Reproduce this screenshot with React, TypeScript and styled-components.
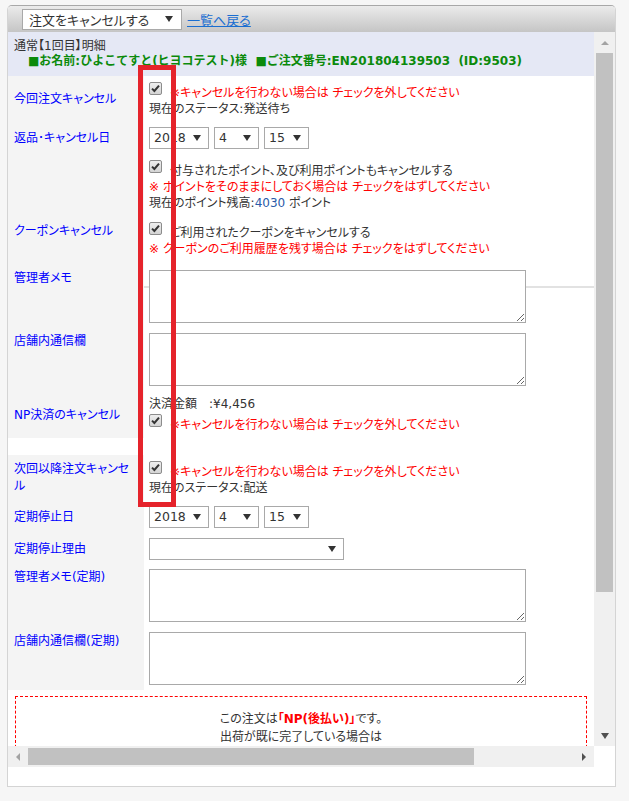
import React from 'react';
import styled, { createGlobalStyle } from 'styled-components';

const Global = createGlobalStyle`
  html, body { margin: 0; padding: 0; background: #f6f6f6; }
  body {
    font-family: "DejaVu Sans", "Noto Sans CJK JP", sans-serif;
    font-size: 12px;
    color: #333;
    font-feature-settings: "palt";
  }
  * { box-sizing: border-box; }
`;

const Page = styled.div`
  position: relative;
  width: 629px;
  height: 801px;
  padding: 5px 0 0 7px;
`;

const Panel = styled.div`
  width: 609px;
  height: 782px;
  border: 1px solid #d4d4d4;
  border-top-color: #a8a8a8;
  border-radius: 5px 5px 0 0;
  background: #fff;
  display: flex;
  flex-direction: column;
  overflow: hidden;
`;

const Header = styled.div`
  flex: none;
  height: 26px;
  display: flex;
  align-items: center;
  gap: 5px;
  padding-left: 14px;
  background: linear-gradient(#ebebeb, #c5c5c5);
`;

const HeaderSelect = styled.div`
  width: 160px;
  height: 21px;
  border: 1px solid #a9a9a9;
  background: #fff;
  display: flex;
  align-items: center;
  justify-content: space-between;
  padding: 0 8px 0 6px;
  font-size: 13px;
  color: #333;
`;

const DownArrow = styled.span<{ $c?: string }>`
  flex: none;
  width: 0;
  height: 0;
  border-left: 4px solid transparent;
  border-right: 4px solid transparent;
  border-top: 6px solid ${(p) => p.$c ?? '#333'};
`;

const UpArrow = styled.span<{ $c?: string }>`
  width: 0;
  height: 0;
  border-left: 4px solid transparent;
  border-right: 4px solid transparent;
  border-bottom: 4px solid ${(p) => p.$c ?? '#333'};
`;

const LeftArrow = styled.span<{ $c?: string }>`
  width: 0;
  height: 0;
  border-top: 4px solid transparent;
  border-bottom: 4px solid transparent;
  border-right: 4px solid ${(p) => p.$c ?? '#333'};
`;

const RightArrow = styled.span<{ $c?: string }>`
  width: 0;
  height: 0;
  border-top: 4px solid transparent;
  border-bottom: 4px solid transparent;
  border-left: 4px solid ${(p) => p.$c ?? '#333'};
`;

const BackLink = styled.a`
  color: #1a6ed1;
  text-decoration: underline;
  font-size: 13px;
  cursor: pointer;
`;

const ScrollArea = styled.div`
  flex: none;
  display: grid;
  grid-template-columns: 586px 21px;
  grid-template-rows: 714px 21px;
`;

const Viewport = styled.div`
  overflow: hidden;
  background: #fff;
`;

const VBar = styled.div`
  background: #f0f0f0;
  display: flex;
  flex-direction: column;
  align-items: center;
`;

const HBar = styled.div`
  background: #f0f0f0;
  display: flex;
  align-items: center;
`;

const ScrollBtn = styled.div`
  flex: none;
  width: 20px;
  height: 21px;
  display: flex;
  align-items: center;
  justify-content: center;
`;

const VThumb = styled.div`
  flex: none;
  width: 17px;
  height: 539px;
  background: #c1c1c1;
`;

const HThumb = styled.div`
  flex: none;
  width: 446px;
  height: 17px;
  background: #c1c1c1;
`;

const Filler = styled.div`
  flex: 1;
`;

const Corner = styled.div`
  background: #fff;
`;

const Footer = styled.div`
  flex: 1;
  background: #fff;
`;

const TitleBox = styled.div`
  background: #e5e8f5;
  padding: 7px 6px;
  line-height: 15px;
`;

const TitleSub = styled.div`
  color: #0b8a0b;
  font-weight: bold;
  padding-left: 14px;
  white-space: pre;
  font-feature-settings: normal;
`;

const Form = styled.div`
  display: grid;
  grid-template-columns: 136px 450px;
`;

const Label = styled.div<{ $top?: number }>`
  background: #f4f4f4;
  color: #0000ff;
  line-height: 17px;
  padding: ${(p) => (p.$top != null ? `${p.$top}px 6px 0` : '0 6px')};
  display: flex;
  align-items: ${(p) => (p.$top != null ? 'flex-start' : 'center')};
`;

const Value = styled.div<{ $pad: string; $rule?: boolean }>`
  position: relative;
  padding: ${(p) => p.$pad};
  padding-left: 5px;
  line-height: 16px;
  white-space: nowrap;
  &::before {
    content: '';
    display: ${(p) => (p.$rule ? 'block' : 'none')};
    position: absolute;
    left: 0;
    right: 0;
    top: 20px;
    height: 2px;
    background: #e2e2e2;
  }
`;

const Spacer = styled.div`
  grid-column: 1 / -1;
  height: 17px;
  background: #fff;
`;

const CheckLine = styled.div`
  display: flex;
  align-items: flex-start;
  height: 21px;
`;

const CheckBox = styled.span`
  flex: none;
  width: 13px;
  height: 13px;
  margin: 2px 8px 0 0;
  border: 1px solid #8c8c8c;
  border-radius: 2px;
  background: linear-gradient(#eeeeee, #d4d4d4);
  display: flex;
  align-items: center;
  justify-content: center;
`;

const CheckText = styled.span<{ $red?: boolean }>`
  padding-top: 5px;
  color: ${(p) => (p.$red ? '#ff0000' : '#333')};
`;

const Line = styled.div<{ $red?: boolean }>`
  height: 16px;
  color: ${(p) => (p.$red ? '#ff0000' : '#333')};
  white-space: pre;
`;

const Num = styled.span`
  color: #2a5aa8;
`;

const SelectRow = styled.div`
  display: flex;
  gap: 5px;
`;

const SelectBox = styled.div<{ $w: number }>`
  width: ${(p) => p.$w}px;
  height: 22px;
  border: 1px solid #a9a9a9;
  background: #fff;
  display: flex;
  align-items: center;
  justify-content: space-between;
  padding: 0 7px 0 4px;
  font-size: 12.5px;
  color: #333;
`;

const Memo = styled.textarea`
  position: relative;
  display: block;
  width: 377px;
  height: 53px;
  margin: 0;
  border: 1px solid #a9a9a9;
  background: #fff;
  resize: both;
  font: inherit;
`;

const Notice = styled.div`
  margin: 6px 7px 0;
  border: 1px dashed #ff0000;
  padding: 13px 10px 40px;
  text-align: center;
  line-height: 18px;
  color: #333;
`;

const Strong = styled.b`
  color: #ff0000;
`;

const Annotation = styled.div`
  position: absolute;
  left: 138px;
  top: 65px;
  width: 38px;
  height: 442px;
  border: 5px solid #e5232b;
  pointer-events: none;
`;

function Check() {
  return (
    <CheckBox>
      <svg width="9" height="9" viewBox="0 0 9 9">
        <path d="M1 4.6 L3.4 7 L8 1.6" fill="none" stroke="#333" strokeWidth="2" />
      </svg>
    </CheckBox>
  );
}

function Select({ w, value }: { w: number; value: string }) {
  return (
    <SelectBox $w={w}>
      <span>{value}</span>
      <DownArrow />
    </SelectBox>
  );
}

function DateSelects() {
  return (
    <SelectRow>
      <Select w={60} value="2018" />
      <Select w={45} value="4" />
      <Select w={45} value="15" />
    </SelectRow>
  );
}

const CANCEL_NOTE = '※キャンセルを行わない場合は チェックを外してください';

export default function App() {
  return (
    <Page>
      <Global />
      <Panel>
        <Header>
          <HeaderSelect>
            <span>注文をキャンセルする</span>
            <DownArrow />
          </HeaderSelect>
          <BackLink>一覧へ戻る</BackLink>
        </Header>
        <ScrollArea>
          <Viewport>
            <TitleBox>
              <div>通常【1回目】明細</div>
              <TitleSub>{'■お名前:ひよこてすと(ヒヨコテスト)様  ■ご注文番号:EN201804139503  (ID:9503)'}</TitleSub>
            </TitleBox>
            <Form>
              <Label>今回注文キャンセル</Label>
              <Value $pad="4px 5px 5px">
                <CheckLine>
                  <Check />
                  <CheckText $red>{CANCEL_NOTE}</CheckText>
                </CheckLine>
                <Line>現在のステータス:発送待ち</Line>
              </Value>

              <Label>返品･キャンセル日</Label>
              <Value $pad="5px">
                <DateSelects />
              </Value>

              <Label />
              <Value $pad="4px 5px">
                <CheckLine>
                  <Check />
                  <CheckText>付与されたポイント、及び利用ポイントもキャンセルする</CheckText>
                </CheckLine>
                <Line $red>※ ポイントをそのままにしておく場合は チェックをはずしてください</Line>
                <Line>
                  現在のポイント残高:<Num>4030</Num> ポイント
                </Line>
              </Value>

              <Label $top={8}>クーポンキャンセル</Label>
              <Value $pad="5px 5px 9px">
                <CheckLine>
                  <Check />
                  <CheckText>ご利用されたクーポンをキャンセルする</CheckText>
                </CheckLine>
                <Line $red>※ クーポンのご利用履歴を残す場合は チェックをはずしてください</Line>
              </Value>

              <Label $top={4}>管理者メモ</Label>
              <Value $pad="4px 5px 6px" $rule>
                <Memo />
              </Value>

              <Label $top={4}>店舗内通信欄</Label>
              <Value $pad="4px 5px 6px">
                <Memo />
              </Value>

              <Label>NP決済のキャンセル</Label>
              <Value $pad="4px 5px 5px">
                <Line>{'決済金額\u3000:¥4,456'}</Line>
                <CheckLine>
                  <Check />
                  <CheckText $red>{CANCEL_NOTE}</CheckText>
                </CheckLine>
              </Value>

              <Spacer />

              <Label>
                次回以降注文キャンセ
                <br />ル
              </Label>
              <Value $pad="4px 5px">
                <CheckLine>
                  <Check />
                  <CheckText $red>{CANCEL_NOTE}</CheckText>
                </CheckLine>
                <Line>現在のステータス:配送</Line>
              </Value>

              <Label>定期停止日</Label>
              <Value $pad="6px 5px">
                <DateSelects />
              </Value>

              <Label>定期停止理由</Label>
              <Value $pad="4px 5px">
                <Select w={195} value="" />
              </Value>

              <Label $top={5}>管理者メモ(定期)</Label>
              <Value $pad="5px 5px 6px">
                <Memo />
              </Value>

              <Label $top={5}>店舗内通信欄(定期)</Label>
              <Value $pad="4px 5px 5px">
                <Memo />
              </Value>
            </Form>
            <Notice>
              <div>
                この注文は<Strong>「NP(後払い)」</Strong>です。
              </div>
              <div>出荷が既に完了している場合は</div>
            </Notice>
          </Viewport>
          <VBar>
            <ScrollBtn>
              <UpArrow $c="#a3a3a3" />
            </ScrollBtn>
            <VThumb />
            <Filler />
            <ScrollBtn>
              <DownArrow $c="#505050" />
            </ScrollBtn>
          </VBar>
          <HBar>
            <ScrollBtn>
              <LeftArrow $c="#a3a3a3" />
            </ScrollBtn>
            <HThumb />
            <Filler />
            <ScrollBtn>
              <RightArrow $c="#505050" />
            </ScrollBtn>
          </HBar>
          <Corner />
        </ScrollArea>
        <Footer />
      </Panel>
      <Annotation />
    </Page>
  );
}
